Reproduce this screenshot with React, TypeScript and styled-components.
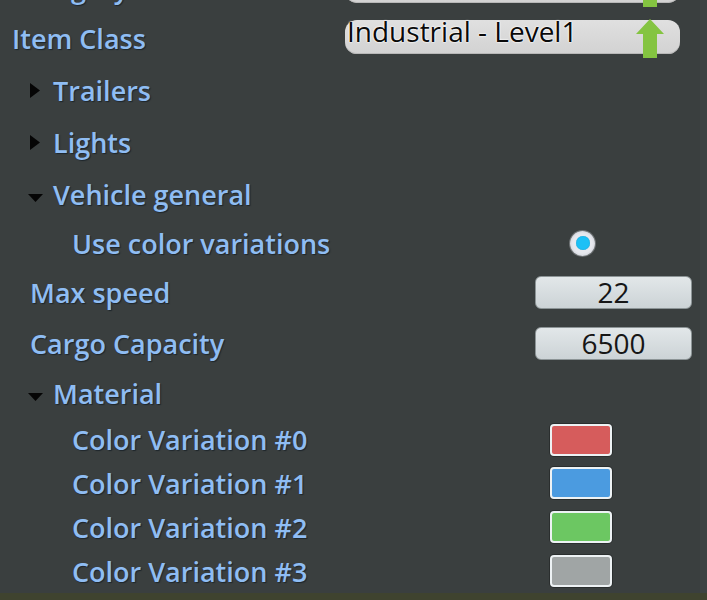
import { createGlobalStyle, styled } from 'styled-components';

const GlobalStyle = createGlobalStyle`
  html, body {
    margin: 0;
    padding: 0;
    background: #3a3f3f;
    overflow: hidden;
  }
  body {
    font-family: 'Open Sans', 'Noto Sans', 'DejaVu Sans', sans-serif;
  }
`;

type RowSpec =
  | { kind: 'select'; label: string; value: string; h: number; indent: number }
  | { kind: 'group'; label: string; open: boolean; h: number; indent: number }
  | { kind: 'toggle'; label: string; h: number; indent: number }
  | { kind: 'number'; label: string; value: string; h: number; indent: number }
  | { kind: 'color'; label: string; color: string; h: number; indent: number };

const rows: RowSpec[] = [
  { kind: 'select', label: 'Category', value: 'Vehicles - Trucks', h: 51, indent: 12 },
  { kind: 'select', label: 'Item Class', value: 'Industrial - Level1', h: 51, indent: 12 },
  { kind: 'group', label: 'Trailers', open: false, h: 52, indent: 30 },
  { kind: 'group', label: 'Lights', open: false, h: 52, indent: 30 },
  { kind: 'group', label: 'Vehicle general', open: true, h: 52, indent: 28 },
  { kind: 'toggle', label: 'Use color variations', h: 46, indent: 72 },
  { kind: 'number', label: 'Max speed', value: '22', h: 52, indent: 30 },
  { kind: 'number', label: 'Cargo Capacity', value: '6500', h: 50, indent: 30 },
  { kind: 'group', label: 'Material', open: true, h: 50, indent: 28 },
  { kind: 'color', label: 'Color Variation #0', color: '#d65c5c', h: 43, indent: 72 },
  { kind: 'color', label: 'Color Variation #1', color: '#4b9be0', h: 44, indent: 72 },
  { kind: 'color', label: 'Color Variation #2', color: '#6cc762', h: 44, indent: 72 },
  { kind: 'color', label: 'Color Variation #3', color: '#a0a5a5', h: 44, indent: 72 },
];

export default function App() {
  return (
    <>
      <GlobalStyle />
      <Frame>
        <Panel>
          <List>
            {rows.map((row) => (
              <Row key={row.label} $h={row.h} $indent={row.indent}>
                {row.kind === 'group' && (
                  <Caret $open={row.open}>
                    {row.open ? (
                      <svg width="15" height="8" viewBox="0 0 15 8">
                        <polygon points="0,0 15,0 7.5,8" fill="#050505" />
                      </svg>
                    ) : (
                      <svg width="10" height="15" viewBox="0 0 10 15">
                        <polygon points="0,0 10,7.5 0,15" fill="#050505" />
                      </svg>
                    )}
                  </Caret>
                )}
                <Label>{row.label}</Label>
                {row.kind === 'select' && (
                  <Select>
                    <SelectText>{row.value}</SelectText>
                    <UpArrow width="28" height="39" viewBox="0 0 28 39">
                      <polygon points="14,0 28,15 21,15 21,39 7,39 7,15 0,15" fill="#84c441" />
                    </UpArrow>
                  </Select>
                )}
                {row.kind === 'toggle' && (
                  <Radio>
                    <RadioDot />
                  </Radio>
                )}
                {row.kind === 'number' && <NumberBox>{row.value}</NumberBox>}
                {row.kind === 'color' && <Swatch $color={row.color} />}
              </Row>
            ))}
          </List>
        </Panel>
        <RightEdge />
      </Frame>
      <BottomStrip />
    </>
  );
}

const Frame = styled.div`
  display: flex;
  height: 593px;
  overflow: hidden;
`;

const Panel = styled.div`
  flex: 1;
  overflow: hidden;
`;

const RightEdge = styled.div`
  width: 7px;
  background: #3d4343;
`;

const BottomStrip = styled.div`
  height: 7px;
  background: #3f432f;
`;

const List = styled.div`
  display: flex;
  flex-direction: column;
  margin-top: -38px;
`;

const Row = styled.div<{ $h: number; $indent: number }>`
  display: flex;
  align-items: center;
  height: ${(p) => p.$h}px;
  padding-left: ${(p) => p.$indent}px;
`;

const Caret = styled.span<{ $open: boolean }>`
  display: flex;
  width: ${(p) => (p.$open ? 25 : 23)}px;
  margin-top: ${(p) => (p.$open ? 8 : 0)}px;
`;

const Label = styled.span`
  flex: 1;
  color: #8fbdf3;
  font-size: 27px;
  font-weight: 600;
  white-space: nowrap;
  text-shadow: 1px 1px 1px rgba(10, 20, 30, 0.6);
`;

const Select = styled.div`
  position: relative;
  display: flex;
  align-items: flex-start;
  width: 335px;
  height: 34px;
  margin-right: 20px;
  margin-top: -3px;
  border-radius: 12px;
  background: linear-gradient(#e0e0e0, #d2d2d2);
  box-shadow: inset 0 -1px 0 #b8b8b8;
`;

const SelectText = styled.span`
  padding-left: 2px;
  margin-top: -6px;
  font-size: 28px;
  line-height: 34px;
  color: #0a0a0a;
  white-space: nowrap;
  text-shadow: 0 0 2px #fff, 0 0 2px #fff, 0 0 1px #fff;
`;

const UpArrow = styled.svg`
  position: absolute;
  right: 16px;
  top: -1px;
`;

const Radio = styled.div`
  display: flex;
  align-items: center;
  justify-content: center;
  width: 25px;
  height: 25px;
  margin-right: 105px;
  border-radius: 50%;
  background: radial-gradient(circle, #e6e8ee 55%, #b9bcc4 100%);
  box-shadow: 0 0 0 1px #6f7476;
`;

const RadioDot = styled.div`
  width: 14px;
  height: 14px;
  border-radius: 50%;
  background: #1cc0f6;
  box-shadow: inset 0 0 1px #0a8ab8;
`;

const NumberBox = styled.div`
  display: flex;
  align-items: center;
  justify-content: center;
  width: 155px;
  height: 31px;
  margin-right: 8px;
  border-radius: 6px;
  border: 1px solid #8c9496;
  background: linear-gradient(#e2e7e9, #ccd3d6);
  color: #161616;
  font-size: 28px;
`;

const Swatch = styled.div<{ $color: string }>`
  width: 58px;
  height: 28px;
  margin-right: 88px;
  border-radius: 4px;
  border: 2px solid #edf2f4;
  background: ${(p) => p.$color};
  box-shadow: 0 0 0 1px #2a2e2e;
`;
